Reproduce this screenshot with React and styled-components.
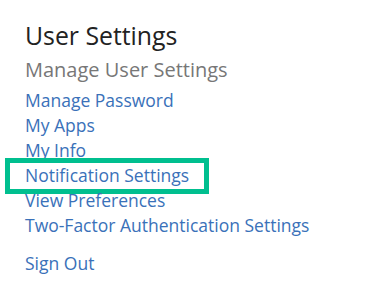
import React from 'react';
import styled, { createGlobalStyle } from 'styled-components';

const GlobalStyle = createGlobalStyle`
	body {
		margin: 0;
		background: #fff;
		font-family: 'Open Sans', 'Noto Sans', sans-serif;
	}
`;

const Page = styled.div`
	padding: 20px 0 0 25px;
`;

const Title = styled.h1`
	margin: 0;
	font-size: 24.8px;
	font-weight: 400;
	line-height: 30px;
	color: #222;
`;

const Subtitle = styled.h2`
	margin: 6px 0 0;
	font-size: 20px;
	font-weight: 400;
	line-height: 28px;
	color: #777;
`;

const LinkList = styled.ul`
	list-style: none;
	margin: 4px 0 0;
	padding: 0;
`;

const Item = styled.li`
	position: relative;
	font-size: 17.5px;
	line-height: 25px;
`;

const Link = styled.a`
	color: #3a71b9;
	text-decoration: none;
`;

const Highlight = styled.span`
	position: absolute;
	left: -20px;
	top: -5px;
	width: 204px;
	height: 36px;
	box-sizing: border-box;
	border: 5px solid #00bf8f;
	pointer-events: none;
`;

const SignOut = styled(Link)`
	display: block;
	margin-top: 13px;
	font-size: 17.5px;
	line-height: 25px;
`;

const links = [
	'Manage Password',
	'My Apps',
	'My Info',
	'Notification Settings',
	'View Preferences',
	'Two-Factor Authentication Settings',
];

export default function App() {
	return (
		<Page>
			<GlobalStyle />
			<Title>User Settings</Title>
			<Subtitle>Manage User Settings</Subtitle>
			<LinkList>
				{links.map((label) => (
					<Item key={label}>
						{label === 'Notification Settings' && <Highlight />}
						<Link href="#">{label}</Link>
					</Item>
				))}
			</LinkList>
			<SignOut href="#">Sign Out</SignOut>
		</Page>
	);
}
